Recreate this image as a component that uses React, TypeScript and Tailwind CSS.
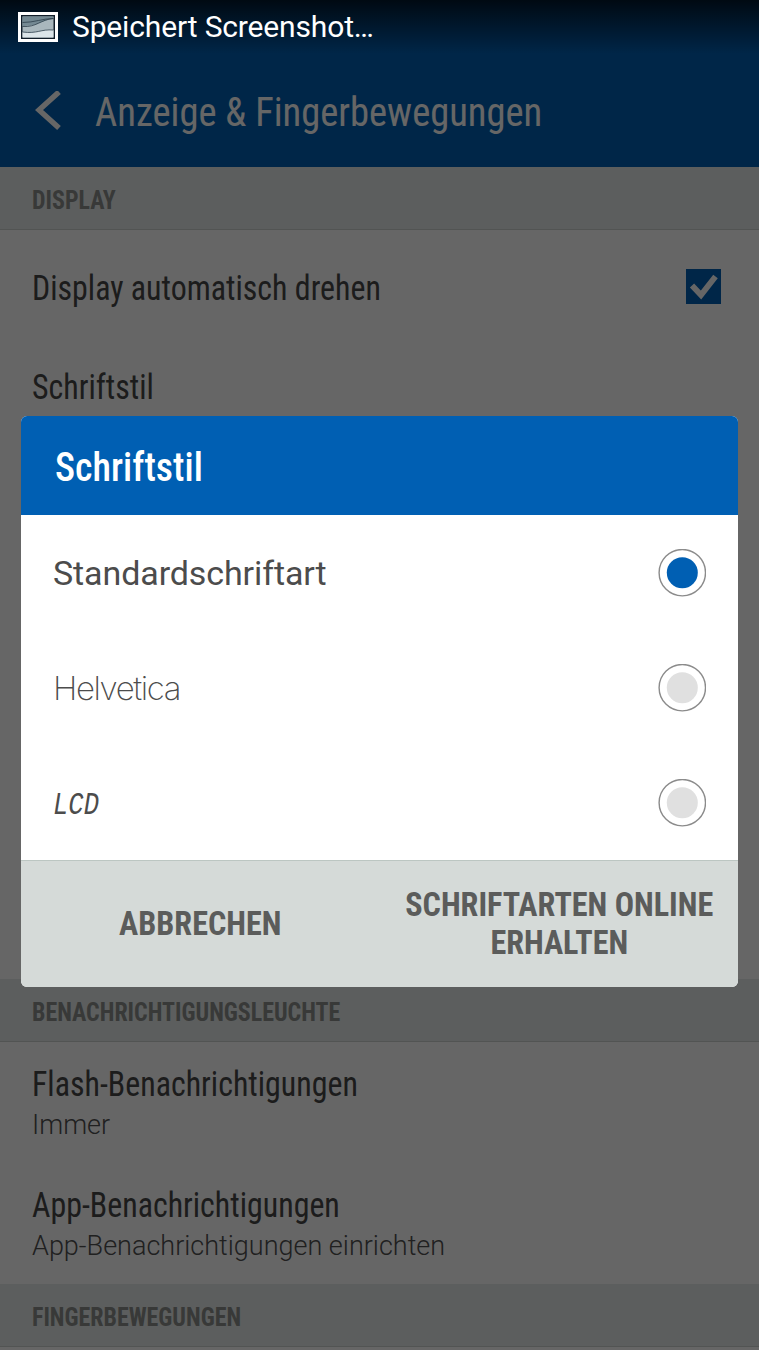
import React from "react";

type sectionHeaderProps = {
  title: string;
};

const SectionHeader: React.FC<sectionHeaderProps> = ({ title }) => (
  <div className="flex h-[63px] shrink-0 items-center border-b border-[#cdd3d0] bg-[#e6ecea] px-8 pt-[5px]">
    <h2 className="font-stretch-condensed origin-left scale-x-[0.957] text-[25px] leading-8 font-bold whitespace-nowrap text-[#8c8f8d]">
      {title}
    </h2>
  </div>
);

type settingProps = {
  title: string;
  summary?: string;
};

const Setting: React.FC<settingProps> = ({ title, summary }) => (
  <div className="flex flex-col items-start">
    <span className="font-stretch-condensed origin-left scale-x-[0.925] text-[34.5px] leading-[42px] whitespace-nowrap text-[#484848]">
      {title}
    </span>
    {summary && (
      <span className="text-[27px] leading-[40px] font-light whitespace-nowrap text-[#505050]">
        {summary}
      </span>
    )}
  </div>
);

type fontOptionProps = {
  children: React.ReactNode;
  checked?: boolean;
};

const FontOption: React.FC<fontOptionProps> = ({ children, checked }) => (
  <label className="flex h-[115px] items-center justify-between pr-8 pl-8">
    {children}
    <svg className="size-12 shrink-0" viewBox="0 0 48 48">
      <circle cx="24.3" cy="23.7" r="23.2" fill="white" stroke="#8b8b8b" strokeWidth="1.4" />
      <circle cx="24.3" cy="23.7" r="15.5" fill={checked ? "#005fb3" : "#e0e0e0"} />
    </svg>
  </label>
);

const StatusBar: React.FC = () => (
  <div className="absolute inset-x-0 top-0 flex h-[54px] items-center gap-[14px] bg-linear-to-b from-black/75 to-transparent pl-[18px]">
    <svg className="h-[30px] w-10" viewBox="0 0 40 30">
      <rect width="40" height="30" fill="white" />
      <rect x="3" y="3" width="34" height="24" fill="#101c28" />
      <rect x="4.5" y="4.5" width="31" height="21" fill="#a9b7bd" />
      <path d="M4.5 4.5h31v2c-12 2-16 8-31 7.500z" fill="#748993" />
      <path d="M4.5 20c15 2 18-3 31-2v7.500h-31z" fill="#dbe4e8" />
      <path
        d="M4.5 14.500c14 1 18-7 31-8M4.5 10.500c12 0 20-4 31-4M4.5 20c15 2 18-3 31-2"
        fill="none"
        stroke="#2c3e4a"
        strokeWidth="0.8"
      />
    </svg>
    <span className="text-[30px] leading-[54px] tracking-[-0.15px] whitespace-nowrap text-white">
      Speichert Screenshot…
    </span>
  </div>
);

const App: React.FC = () => {
  return (
    <div className="relative h-[1350px] w-[759px] overflow-hidden bg-white font-['Roboto',sans-serif]">
      <div className="flex h-full flex-col">
        <header className="flex h-[167px] shrink-0 items-center bg-[#005fb3] pt-[54px] pl-[35px]">
          <svg className="h-10 w-[26px] shrink-0" viewBox="0 0 26 40">
            <path d="M24 1L4 19L24 37" fill="none" stroke="white" strokeWidth="5.5" />
          </svg>
          <h1 className="font-stretch-condensed ml-[34px] origin-left scale-x-[0.94] pt-[2px] text-[41px] leading-[50px] whitespace-nowrap text-white">
            Anzeige &amp; Fingerbewegungen
          </h1>
        </header>

        <SectionHeader title="DISPLAY" />
        <div className="flex h-[115px] shrink-0 items-center justify-between pr-[38px] pl-8">
          <Setting title="Display automatisch drehen" />
          <svg className="mb-[3px] size-[35px]" viewBox="0 0 35 35">
            <rect width="35" height="35" fill="#005fb3" />
            <path d="M6 16.5L15 26L29.500 7.500" fill="none" stroke="white" strokeWidth="5.8" />
          </svg>
        </div>
        <div className="flex-1 px-8 pt-[21px]">
          <Setting title="Schriftstil" />
        </div>

        <SectionHeader title="BENACHRICHTIGUNGSLEUCHTE" />
        <div className="h-[121px] shrink-0 px-8 pt-[21px]">
          <Setting title="Flash-Benachrichtigungen" summary="Immer" />
        </div>
        <div className="h-[121px] shrink-0 px-8 pt-[21px]">
          <Setting title="App-Benachrichtigungen" summary="App-Benachrichtigungen einrichten" />
        </div>
        <SectionHeader title="FINGERBEWEGUNGEN" />
        <div className="h-[3px] shrink-0" />
      </div>

      <div className="absolute inset-0 bg-black/60 px-[21px] pt-[416px]">
        <div className="flex h-[571px] w-[717px] flex-col overflow-hidden rounded-md bg-white">
          <div className="flex h-[99px] shrink-0 items-center bg-[#005fb3] pt-[3px] pl-[34px]">
            <h2 className="font-stretch-condensed origin-left scale-x-[0.935] text-[40.5px] leading-[50px] font-[480] whitespace-nowrap text-white">
              Schriftstil
            </h2>
          </div>
          <FontOption checked>
            <span className="pt-[2px] text-[34px] tracking-[-0.1px] whitespace-nowrap text-[#4c4c4c]">
              Standardschriftart
            </span>
          </FontOption>
          <FontOption>
            <span className="pt-[2px] font-['Inter',sans-serif] text-[33px] font-extralight tracking-[-1.4px] whitespace-nowrap text-[#4c4c4c]">
              Helvetica
            </span>
          </FontOption>
          <FontOption>
            <span className="origin-left scale-x-80 pt-[7px] font-['Liberation_Mono',monospace] text-[32px] whitespace-nowrap text-[#4c4c4c] italic">
              LCD
            </span>
          </FontOption>
          <div className="grid flex-1 grid-cols-2 border-t border-[#bcc6c2] bg-[#d5dad8] pb-[2px] text-center text-[34px] leading-[38.5px] font-bold whitespace-nowrap text-[#5b5c5b]">
            <button className="font-stretch-condensed scale-x-[0.945]" type="button">
              ABBRECHEN
            </button>
            <button className="font-stretch-condensed scale-x-[0.945]" type="button">
              SCHRIFTARTEN ONLINE
              <br />
              ERHALTEN
            </button>
          </div>
        </div>
      </div>

      <StatusBar />
    </div>
  );
};

export default App;
